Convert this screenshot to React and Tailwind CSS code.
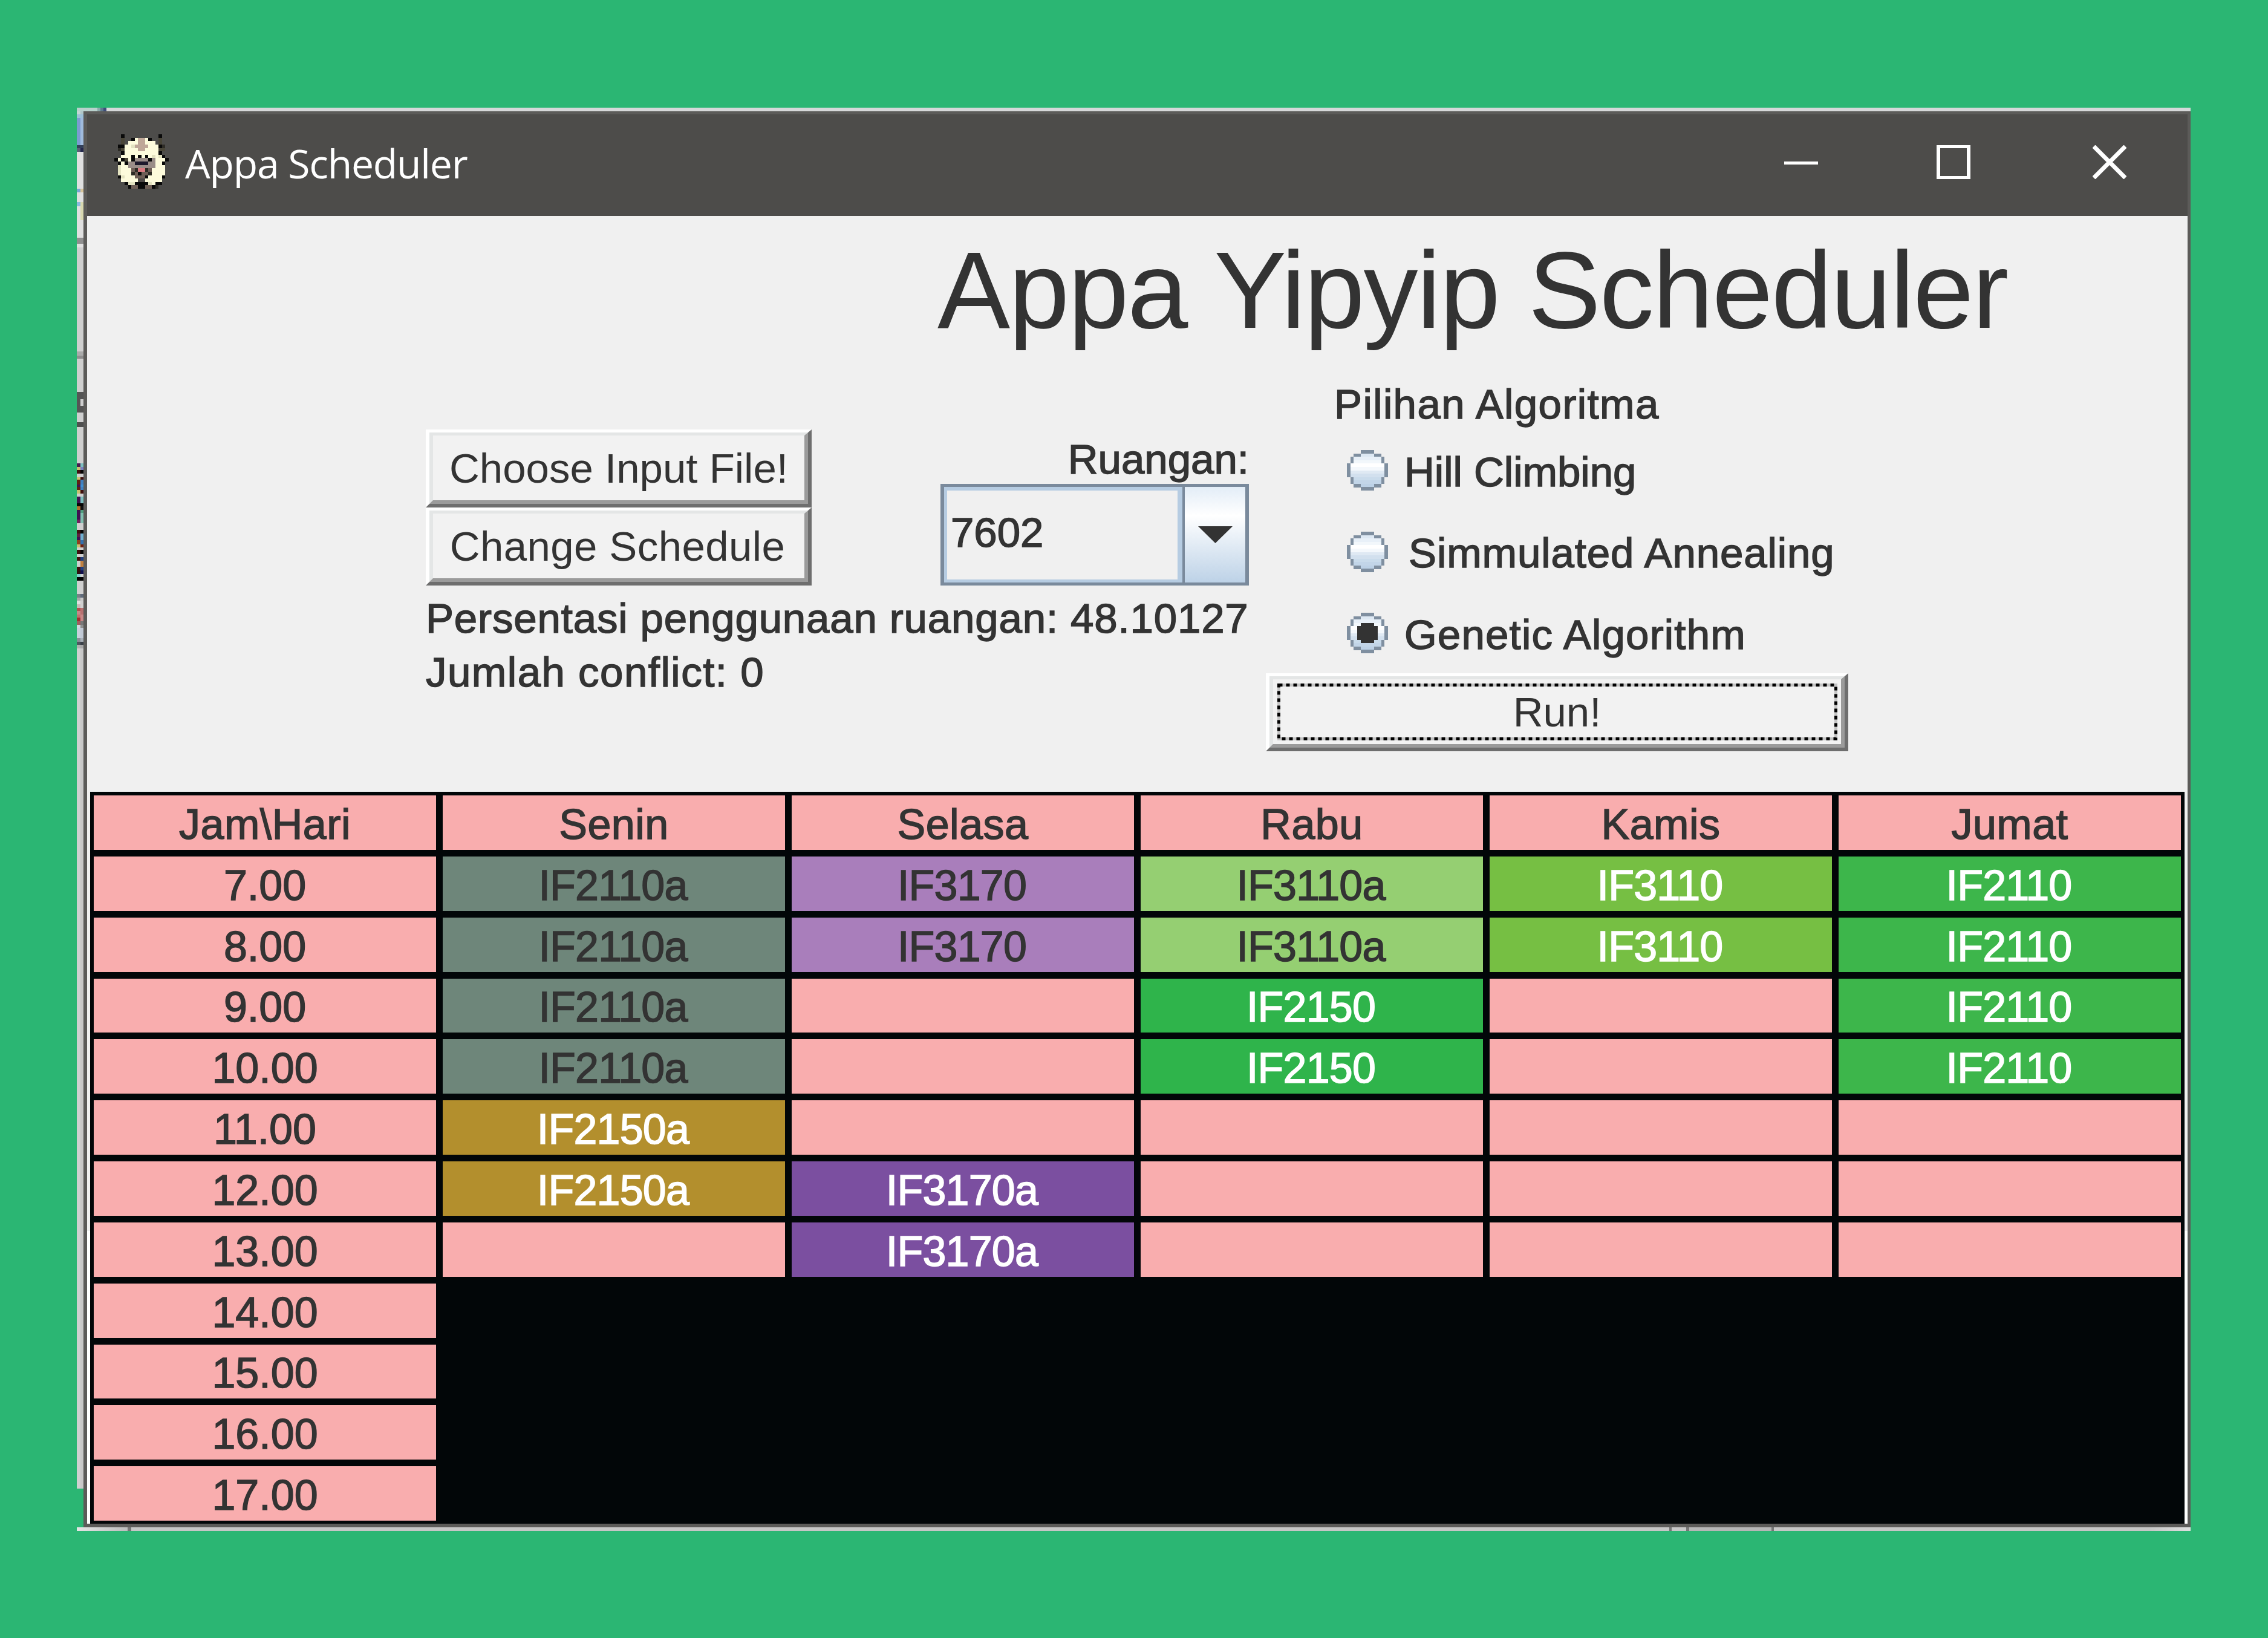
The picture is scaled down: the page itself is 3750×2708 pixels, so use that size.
import React from "react";

// Appa icon, 16x16 pixels
const appaRows = [
  "..k..........k..",
  "..o..kcttck..o..",
  "..o.cccttccc.o..",
  ".kkccpttttccckd.",
  ".doccccttccccoo.",
  "..kcccccccccck..",
  "..ccckckckcpcpk.",
  "kckockggggkgccck",
  ".kckggnnnnggcck.",
  ".pccggggggggccc.",
  ".pcccbdrrdbcccc.",
  ".pcccdbkbbdcccc.",
  ".kpcccbbbkcccck.",
  "..cccccmmccccc..",
  "...kppkkkkpckk..",
  "....kbbkkbbkd...",
];
const appaColors = {
  k: "#0a0a0a", o: "#4a4638", d: "#2e2c26", c: "#fdfbdc", p: "#e3e2c0", t: "#bfa798",
  g: "#9a8d88", n: "#1e1a2c", b: "#6e5e56", m: "#4f4a48", r: "#d87a80",
};

const radioRows = [
  "....bbbb....",
  "..bbffffbb..",
  ".bffffffffb.",
  ".bffffffffb.",
  "bffffffffffb",
  "bffffffffffb",
  "bffffffffffb",
  "bffffffffffb",
  ".bffffffffb.",
  ".bffffffffb.",
  "..bbffffbb..",
  "....bbbb....",
];
const radioFill = ["", "#dde8f3", "#e8f0f8", "#f2f7fb", "#ffffff", "#f4f8fc", "#dfe9f3", "#d2e0ee", "#c9dbeb", "#c2d5e8", "#bcd1e6", ""];

function Pixels({ rows, colorAt, className }) {
  return (
    <svg viewBox={`0 0 ${rows[0].length} ${rows.length}`} preserveAspectRatio="none" shapeRendering="crispEdges" className={className}>
      {rows.map((row, y) =>
        row.split("").map((ch, x) =>
          ch === "." ? null : <rect key={`${x}-${y}`} x={x} y={y} width="1.02" height="1.02" fill={colorAt(ch, y)} />
        )
      )}
    </svg>
  );
}

function Radio({ selected }) {
  const rows = selected
    ? radioRows.map((row, y) => {
        if (y === 3 || y === 8) return row.slice(0, 4) + "dddd" + row.slice(8);
        if (y >= 4 && y <= 7) return row.slice(0, 3) + "dddddd" + row.slice(9);
        return row;
      })
    : radioRows;
  return (
    <Pixels
      rows={rows}
      className="w-[68px] h-[67px] shrink-0"
      colorAt={(ch, y) => (ch === "b" ? "#7f8fa0" : ch === "d" ? "#333333" : radioFill[y])}
    />
  );
}

// sliver of the desktop behind the window: [height, left half, right half]
const strip = [
  [5, "#c3d6d3", "#b0c6c8"], [6, "#9dc0d8", "#9dc0d8"], [45, "#7b9bd0", "#a0bbdd"], [5, "#33405a", "#33405a"],
  [6, "#5a5f78", "#25294d"], [61, "#e0e0e0", "#e0e0e0"], [6, "#7aa6d6", "#d8c49a"], [16, "#e0e0e0", "#e0e0e0"],
  [7, "#8cb8e0", "#d8d8b0"], [23, "#e0e0e0", "#d8d8b0"], [29, "#e0e0e0", "#e0e0e0"], [10, "#8f8f8f", "#8f8f8f"],
  [6, "#e0e0e0", "#e0e0e0"], [172, "#cfcfcf", "#cfcfcf"], [7, "#aaaaaa", "#aaaaaa"], [5, "#8e8e8e", "#8e8e8e"],
  [55, "#cfcfcf", "#cfcfcf"], [12, "#555555", "#555555"], [11, "#555555", "#cfcfcf"], [11, "#555555", "#555555"],
  [16, "#cfcfcf", "#cfcfcf"], [8, "#4f4f4f", "#4f4f4f"], [60, "#cfcfcf", "#cfcfcf"],
  [6, "#4a1a50", "#7cc0c0"], [5, "#c9c070", "#7a80c0"], [6, "#401010", "#050505"], [6, "#cfcfcf", "#cfcfcf"],
  [4, "#c9c070", "#401010"], [8, "#602010", "#4080c0"], [4, "#401050", "#4090d0"], [5, "#602010", "#4080c0"],
  [6, "#c9c070", "#401010"], [5, "#cfcfcf", "#cfcfcf"], [11, "#401050", "#7cc0c0"], [5, "#050505", "#050505"],
  [6, "#b07030", "#101010"], [5, "#401050", "#50a080"], [11, "#401050", "#80c0b0"], [6, "#702060", "#80c0b0"],
  [11, "#cfcfcf", "#cfcfcf"], [6, "#401010", "#050505"], [6, "#602040", "#70b0d0"], [5, "#401050", "#70b0d0"],
  [7, "#904020", "#3070b0"], [5, "#c9c070", "#702010"], [4, "#cfcfcf", "#cfcfcf"], [7, "#401010", "#050505"],
  [5, "#cfcfcf", "#cfcfcf"], [6, "#401010", "#204080"], [10, "#cfcfcf", "#c08040"], [6, "#401010", "#204080"],
  [6, "#301010", "#101050"], [5, "#80d0d0", "#cfcfcf"], [6, "#050505", "#050505"], [22, "#d0d0d0", "#d0d0d0"],
  [6, "#7a7f88", "#5f6a7a"], [5, "#a8a8a8", "#c8c8c8"], [6, "#e0e0e0", "#d0d0d0"], [6, "#c8b8b8", "#d0d0d0"],
  [5, "#b05050", "#b87070"], [6, "#c88888", "#b87070"], [5, "#c07070", "#c88888"], [6, "#a03030", "#c88888"],
  [6, "#a06060", "#787878"], [5, "#d0d8e0", "#909090"], [17, "#c8d0dc", "#c0c8d4"], [6, "#8a8f98", "#a8b0b8"],
  [5, "#505560", "#3a4048"], [6, "#b0b0b0", "#a8a8a8"], [1389, "#d0d0d0", "#c8c8c8"],
];

function DesktopStrip() {
  let y = 0;
  return (
    <svg viewBox="0 0 11 2341" preserveAspectRatio="none" shapeRendering="crispEdges" className="w-[11px] h-[2341px] shrink-0">
      {strip.map(([h, a, b], i) => {
        const top = y;
        y += h;
        return (
          <g key={i}>
            <rect x="0" y={top} width="6" height={h} fill={a} />
            <rect x="6" y={top} width="5" height={h} fill={b} />
          </g>
        );
      })}
    </svg>
  );
}

function JavaButton({ children, focus, className = "" }) {
  return (
    <button className="block w-full h-[129px] border-[6px] border-t-[5px] border-t-white border-l-white border-r-[#6e6e6e] border-b-[#6e6e6e]">
      <div className={`relative h-full border-[6px] border-t-[5px] border-t-[#e4e6e6] border-l-[#e4e6e6] border-r-[#9b9b9b] border-b-[#9b9b9b] bg-[#f2f2f2] flex items-center justify-center text-[69px] leading-[69px] text-[#333] pt-[2px] ${className}`}>
        {focus && (
          <svg className="absolute left-[7px] top-[7px] w-[926px] h-[94px]" viewBox="0 0 926 94" fill="none">
            <rect x="2.5" y="2.5" width="921" height="89" stroke="#c4c4c4" strokeWidth="5" />
            <rect x="2.5" y="2.5" width="921" height="89" stroke="#000" strokeWidth="5" strokeDasharray="6 6" />
          </svg>
        )}
        {children}
      </div>
    </button>
  );
}

const P = "bg-[#f9adae] text-[#333]";
const cellStyles = {
  a: "bg-[#6e867a] text-[#333]",
  b: "bg-[#a97ebb] text-[#333]",
  c: "bg-[#95cf72] text-[#333]",
  d: "bg-[#76bf43] text-white",
  e: "bg-[#3db64b] text-white",
  f: "bg-[#2fb44b] text-white",
  g: "bg-[#b38f2d] text-white",
  h: "bg-[#7b4fa0] text-white",
};

const header = ["Jam\\Hari", "Senin", "Selasa", "Rabu", "Kamis", "Jumat"];
const schedule = [
  ["7.00", ["IF2110a", "a"], ["IF3170", "b"], ["IF3110a", "c"], ["IF3110", "d"], ["IF2110", "e"]],
  ["8.00", ["IF2110a", "a"], ["IF3170", "b"], ["IF3110a", "c"], ["IF3110", "d"], ["IF2110", "e"]],
  ["9.00", ["IF2110a", "a"], null, ["IF2150", "f"], null, ["IF2110", "e"]],
  ["10.00", ["IF2110a", "a"], null, ["IF2150", "f"], null, ["IF2110", "e"]],
  ["11.00", ["IF2150a", "g"], null, null, null, null],
  ["12.00", ["IF2150a", "g"], ["IF3170a", "h"], null, null, null],
  ["13.00", null, ["IF3170a", "h"], null, null, null],
];
const lateHours = ["14.00", "15.00", "16.00", "17.00"];

function Cell({ children, className }) {
  return <div className={`flex items-center justify-center pt-[6px] text-[70px] leading-[70px] min-h-0 [-webkit-text-stroke:1.5px] ${className}`}>{children}</div>;
}

export default function App() {
  return (
    <div className="w-[3750px] h-[2708px] bg-[#2bb673] pt-[178px] pl-[127px] font-['Liberation_Sans',sans-serif] overflow-hidden">
      <div className="w-[3495px]">
        {/* top sliver */}
        <div className="flex h-[6px]">
          <div className="w-[34px] bg-[#b9d1cc]" />
          <div className="w-[5px] bg-[#8aa8aa]" />
          <div className="w-[5px] bg-[#5f7a90]" />
          <div className="w-[5px] bg-[#3f4c7a]" />
          <div className="flex-1 bg-[#d6d8d9]" />
        </div>

        <div className="flex">
          <DesktopStrip />

          <div className="flex-1 h-[2341px] border-[#5c5b59] border-t-[5px] border-l-[6px] border-r-[5px] border-b-[6px] flex flex-col bg-[#f0f0f0]">
            {/* title bar */}
            <div className="h-[168px] shrink-0 bg-[#4d4c4a] flex items-center pl-[45px] pr-[101px]">
              <Pixels rows={appaRows} colorAt={(ch) => appaColors[ch]} className="w-[90px] h-[90px] mt-[-12px]" />
              <span className="ml-[27px] font-['Open_Sans',sans-serif] text-[66px] tracking-[-1.2px] leading-[80px] text-white mt-[-8px]">Appa Scheduler</span>
              <div className="ml-auto flex items-center mb-[10px]">
                <div className="w-[56px] h-[56px] flex items-center">
                  <div className="w-full h-[5px] bg-white mt-[2px]" />
                </div>
                <div className="ml-[196px] w-[56px] h-[56px] border-x-[6px] border-y-[5px] border-white" />
                <svg className="ml-[202px] w-[56px] h-[56px]" viewBox="0 0 56 56" stroke="#fff" strokeWidth="7" fill="none">
                  <path d="M2 2 L54 54 M54 2 L2 54" />
                </svg>
              </div>
            </div>

            {/* controls */}
            <div className="h-[952px] shrink-0">
              <h1 className="pt-[33px] pl-[1406px] text-[180px] tracking-[-2px] leading-[180px] font-normal text-[#333] whitespace-nowrap">Appa Yipyip Scheduler</h1>

              <div className="flex mt-[64px] pl-[560px]">
                <div className="w-[1361px] pt-[76px]">
                  <div className="flex justify-between items-end h-[258px]">
                    <div className="w-[638px]">
                      <JavaButton>Choose Input File!</JavaButton>
                      <JavaButton className="tracking-[0.4px] pr-[4px]">Change Schedule</JavaButton>
                    </div>
                    <div className="w-[510px]">
                      <div className="text-right text-[69px] leading-[69px] text-[#333] mb-[6px] [-webkit-text-stroke:1.5px]">Ruangan:</div>
                      <div className="h-[168px] border-[#7a8a9c] border-x-[6px] border-y-[5px] flex">
                        <div className="flex-1 border-[#b6cce2] border-t-[6px] border-b-[5px] border-l-[5px] border-r-[8px] bg-[#f0f0f0] flex items-center pl-[6px] pb-[8px] text-[69px] leading-[69px] text-[#333] [-webkit-text-stroke:1.5px]">
                          7602
                        </div>
                        <div className="w-[104px] border-l-[4px] border-[#7a8a9c] bg-linear-to-b from-[#e3edf7] via-white via-30% to-[#bdd2e7] flex items-center justify-center">
                          <svg className="w-[57px] h-[28px]" viewBox="0 0 57 28" fill="#333">
                            <path d="M0 0 H57 L28.5 28 Z" />
                          </svg>
                        </div>
                      </div>
                    </div>
                  </div>
                  <div className="mt-[20px] text-[69px] leading-[69px] text-[#333] tracking-[0.85px] whitespace-nowrap [-webkit-text-stroke:1.5px]">Persentasi penggunaan ruangan: 48.10127</div>
                  <div className="mt-[20px] text-[69px] leading-[69px] text-[#333] tracking-[1.5px] whitespace-nowrap [-webkit-text-stroke:1.5px]">Jumlah conflict: 0</div>
                </div>

                <div className="w-[963px] ml-[28px]">
                  <div className="pl-[113px] text-[69px] leading-[69px] text-[#333] tracking-[1.4px] whitespace-nowrap [-webkit-text-stroke:1.5px]">Pilihan Algoritma</div>
                  <div className="mt-[41px] pl-[134px] flex flex-col gap-[67.5px] text-[69px] leading-[69px] text-[#333] [-webkit-text-stroke:1.5px]">
                    <div className="flex items-center h-[67px] gap-[27px]">
                      <Radio />
                      <span className="pt-[5px]">Hill Climbing</span>
                    </div>
                    <div className="flex items-center h-[67px] gap-[34px] tracking-[0.9px]">
                      <Radio />
                      <span className="pt-[5px]">Simmulated Annealing</span>
                    </div>
                    <div className="flex items-center h-[67px] gap-[27px] tracking-[1.2px]">
                      <Radio selected />
                      <span className="pt-[5px]">Genetic Algorithm</span>
                    </div>
                  </div>
                  <div className="mt-[33px]">
                    <JavaButton focus>Run!</JavaButton>
                  </div>
                </div>
              </div>
            </div>

            {/* schedule table */}
            <div className="px-[5px] h-[1210px] shrink-0 bg-[linear-gradient(#f0f0f0_60%,#ffffff_60%)]">
              <div className="h-full bg-[#020608] pt-[6px] px-[6px] pb-[5px] grid grid-cols-6 grid-rows-12 gap-[11px]">
                {header.map((h) => (
                  <Cell key={h} className={`${P} tracking-[0.5px]`}>{h}</Cell>
                ))}
                {schedule.map(([hour, ...cells]) => (
                  <React.Fragment key={hour}>
                    <Cell className={P}>{hour}</Cell>
                    {cells.map((c, i) =>
                      c ? (
                        <Cell key={i} className={`${cellStyles[c[1]]} tracking-[-0.8px] pr-[3px]`}>{c[0]}</Cell>
                      ) : (
                        <Cell key={i} className={P} />
                      )
                    )}
                  </React.Fragment>
                ))}
                {lateHours.map((hour) => (
                  <Cell key={hour} className={`${P} col-start-1`}>{hour}</Cell>
                ))}
              </div>
            </div>
          </div>
        </div>

        {/* bottom sliver */}
        <div className="flex h-[6px] bg-[#c6c6c6]">
          <div className="w-[84px] bg-linear-to-r from-[#e4e4e4] to-[#bdbdbd]" />
          <div className="w-[6px] bg-[#777]" />
          <div className="w-[2543px]" />
          <div className="w-[4px] bg-[#777]" />
          <div className="w-[24px]" />
          <div className="w-[5px] bg-[#777]" />
          <div className="w-[136px] bg-[#b6b6b6]" />
          <div className="w-[4px] bg-[#777]" />
          <div className="flex-1 bg-linear-to-r from-[#c6c6c6] from-90% to-[#dedede]" />
        </div>
      </div>
    </div>
  );
}
